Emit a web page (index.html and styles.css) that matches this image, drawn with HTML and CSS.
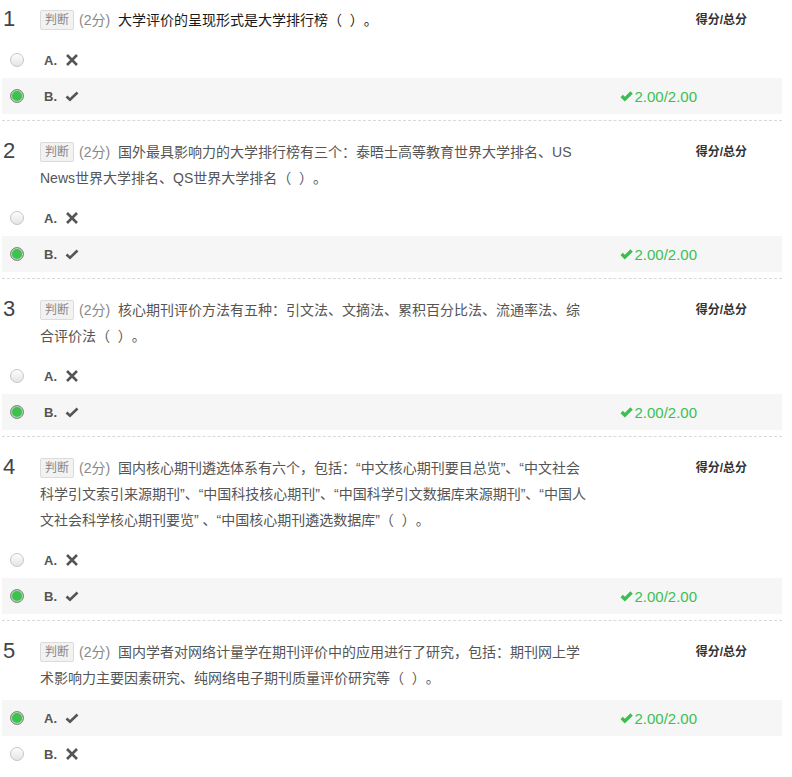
FILE: index.html
```html
<!DOCTYPE html>
<html lang="zh-CN">
<head>
<meta charset="utf-8">
<title>作业详情</title>
<link rel="stylesheet" href="styles.css">
</head>
<body>
<div class="list">

  <section class="question">
    <div class="q-head">
      <div class="q-num">1</div>
      <div class="q-text q-text--dark"><span class="badge">判断</span><span class="points">(2分)</span> 大学评价的呈现形式是大学排行榜（&nbsp; ）。</div>
      <div class="q-score-label">得分/总分</div>
    </div>
    <div class="options">
      <div class="option"><span class="radio"></span><span class="opt-key">A.</span><svg class="mark" viewBox="0 0 14 14"><path d="M2 2 L12 12 M12 2 L2 12"/></svg></div>
      <div class="option option--chosen"><span class="radio radio--on"></span><span class="opt-key">B.</span><svg class="mark" viewBox="0 0 14 14"><path d="M1.5 7.5 L5 10.8 L12.5 3.5"/></svg><span class="score"><svg class="score-check" viewBox="0 0 14 12"><path d="M1.8 6 L5.2 9.4 L12.5 2.2"/></svg>2.00/2.00</span></div>
    </div>
  </section>

  <section class="question">
    <div class="q-head">
      <div class="q-num">2</div>
      <div class="q-text"><span class="badge">判断</span><span class="points">(2分)</span> 国外最具影响力的大学排行榜有三个：泰晤士高等教育世界大学排名、US News世界大学排名、QS世界大学排名（&nbsp; ）。</div>
      <div class="q-score-label">得分/总分</div>
    </div>
    <div class="options">
      <div class="option"><span class="radio"></span><span class="opt-key">A.</span><svg class="mark" viewBox="0 0 14 14"><path d="M2 2 L12 12 M12 2 L2 12"/></svg></div>
      <div class="option option--chosen"><span class="radio radio--on"></span><span class="opt-key">B.</span><svg class="mark" viewBox="0 0 14 14"><path d="M1.5 7.5 L5 10.8 L12.5 3.5"/></svg><span class="score"><svg class="score-check" viewBox="0 0 14 12"><path d="M1.8 6 L5.2 9.4 L12.5 2.2"/></svg>2.00/2.00</span></div>
    </div>
  </section>

  <section class="question">
    <div class="q-head">
      <div class="q-num">3</div>
      <div class="q-text"><span class="badge">判断</span><span class="points">(2分)</span> 核心期刊评价方法有五种：引文法、文摘法、累积百分比法、流通率法、综合评价法（&nbsp; ）。</div>
      <div class="q-score-label">得分/总分</div>
    </div>
    <div class="options">
      <div class="option"><span class="radio"></span><span class="opt-key">A.</span><svg class="mark" viewBox="0 0 14 14"><path d="M2 2 L12 12 M12 2 L2 12"/></svg></div>
      <div class="option option--chosen"><span class="radio radio--on"></span><span class="opt-key">B.</span><svg class="mark" viewBox="0 0 14 14"><path d="M1.5 7.5 L5 10.8 L12.5 3.5"/></svg><span class="score"><svg class="score-check" viewBox="0 0 14 12"><path d="M1.8 6 L5.2 9.4 L12.5 2.2"/></svg>2.00/2.00</span></div>
    </div>
  </section>

  <section class="question">
    <div class="q-head">
      <div class="q-num">4</div>
      <div class="q-text"><span class="badge">判断</span><span class="points">(2分)</span> 国内核心期刊遴选体系有六个，包括：“中文核心期刊要目总览”、“中文社会科学引文索引来源期刊”、“中国科技核心期刊”、“中国科学引文数据库来源期刊”、“中国人文社会科学核心期刊要览” 、“中国核心期刊遴选数据库”（&nbsp; ）。</div>
      <div class="q-score-label">得分/总分</div>
    </div>
    <div class="options">
      <div class="option"><span class="radio"></span><span class="opt-key">A.</span><svg class="mark" viewBox="0 0 14 14"><path d="M2 2 L12 12 M12 2 L2 12"/></svg></div>
      <div class="option option--chosen"><span class="radio radio--on"></span><span class="opt-key">B.</span><svg class="mark" viewBox="0 0 14 14"><path d="M1.5 7.5 L5 10.8 L12.5 3.5"/></svg><span class="score"><svg class="score-check" viewBox="0 0 14 12"><path d="M1.8 6 L5.2 9.4 L12.5 2.2"/></svg>2.00/2.00</span></div>
    </div>
  </section>

  <section class="question question--last">
    <div class="q-head">
      <div class="q-num">5</div>
      <div class="q-text"><span class="badge">判断</span><span class="points">(2分)</span> 国内学者对网络计量学在期刊评价中的应用进行了研究，包括：期刊网上学术影响力主要因素研究、纯网络电子期刊质量评价研究等（&nbsp; ）。</div>
      <div class="q-score-label">得分/总分</div>
    </div>
    <div class="options">
      <div class="option option--chosen"><span class="radio radio--on"></span><span class="opt-key">A.</span><svg class="mark" viewBox="0 0 14 14"><path d="M1.5 7.5 L5 10.8 L12.5 3.5"/></svg><span class="score"><svg class="score-check" viewBox="0 0 14 12"><path d="M1.8 6 L5.2 9.4 L12.5 2.2"/></svg>2.00/2.00</span></div>
      <div class="option"><span class="radio"></span><span class="opt-key">B.</span><svg class="mark" viewBox="0 0 14 14"><path d="M2 2 L12 12 M12 2 L2 12"/></svg></div>
    </div>
  </section>

</div>
</body>
</html>
```

FILE: styles.css
```css
* { box-sizing: border-box; }

html, body {
  margin: 0;
  padding: 0;
  background: #fff;
}

body {
  font-family: "Liberation Sans", Arial, "Noto Sans CJK SC", sans-serif;
  font-size: 14px;
  color: #555;
  text-spacing-trim: space-all;
}

.list {
  width: 780px;
  margin-left: 2px;
}

.question {
  padding: 18px 0 6px;
  border-bottom: 1px dashed #d9d9d9;
}

.question:first-child {
  padding-top: 7px;
}

.question--last {
  border-bottom: none;
}

.q-head {
  display: flex;
  align-items: flex-start;
}

.q-num {
  width: 38px;
  flex: none;
  font-size: 22px;
  line-height: 24px;
  color: #444;
  padding-left: 1px;
}

.q-text {
  width: 552px;
  flex: none;
  font-size: 14px;
  line-height: 26px;
  color: #555;
}

.q-text--dark {
  color: #1a1a1a;
}

.badge {
  display: inline-block;
  height: 20px;
  line-height: 18px;
  padding: 0 4px;
  font-size: 12px;
  color: #888;
  background: #f2f2f2;
  border: 1px solid #dcdcdc;
  border-radius: 2px;
  vertical-align: 1px;
  margin-right: 5px;
}

.points {
  color: #888;
  margin-right: 4px;
}

.q-score-label {
  margin-left: auto;
  padding-right: 35px;
  font-size: 12px;
  font-weight: bold;
  line-height: 26px;
  color: #333;
}

.options {
  margin-top: 9px;
}

.option {
  display: flex;
  align-items: center;
  height: 36px;
}

.option--chosen {
  background: #f6f6f6;
}

.radio {
  width: 14px;
  height: 14px;
  margin-left: 8px;
  border-radius: 50%;
  border: 1px solid #c6c6c6;
  background: linear-gradient(#fdfdfd, #e4e4e4);
  flex: none;
}

.radio--on {
  border: 1px solid #8a8a8a;
  background: #3ec14e;
  box-shadow: inset 0 0 0 1px #b9dcbd;
}

.opt-key {
  margin-left: 20px;
  font-size: 13px;
  font-weight: bold;
  color: #555;
}

.mark {
  width: 14px;
  height: 14px;
  margin-left: 8px;
  fill: none;
  stroke: #555;
  stroke-width: 2.6;
}

.score {
  margin-left: auto;
  margin-right: 85px;
  display: flex;
  align-items: center;
  font-size: 15px;
  color: #3cbf50;
}

.score-check {
  width: 13px;
  height: 12px;
  margin-right: 1px;
  fill: none;
  stroke: #3cbf50;
  stroke-width: 3.6;
}
```
